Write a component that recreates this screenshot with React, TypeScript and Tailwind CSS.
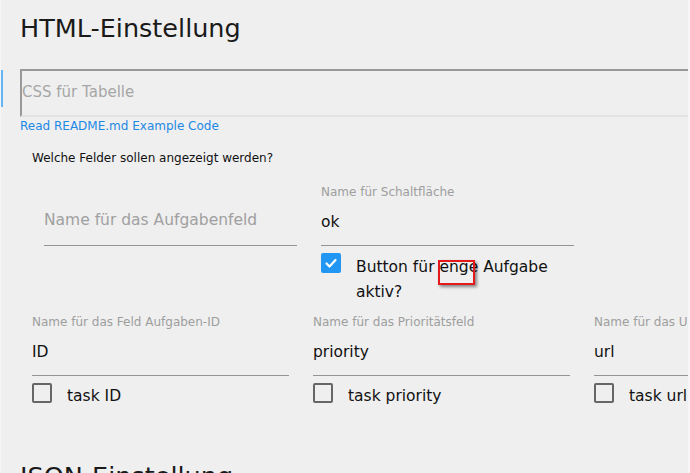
import React from 'react';

const Box = ({ checked }: { checked?: boolean }) =>
  checked ? (
    <span className="flex h-5 w-5 shrink-0 items-center justify-center rounded-[2px] bg-[#2196f3]">
      <svg viewBox="0 0 20 20" className="h-5 w-5" fill="none" stroke="#fff" strokeWidth="2.2" strokeLinecap="round" strokeLinejoin="round">
        <path d="M5.5 10.5l3 3 6-6.5" />
      </svg>
    </span>
  ) : (
    <span className="h-5 w-5 shrink-0 rounded-[2px] border-2 border-[#666]" />
  );

const Field = ({ label, value, width }: { label: string; value: string; width: string }) => (
  <div className={`${width} shrink-0 border-b border-[#949494] pb-[13px]`}>
    <div className="text-[12px] leading-[14px] text-[#9e9e9e] whitespace-nowrap">{label}</div>
    <div className="mt-[13px] text-[15.5px] leading-[20px] text-[#111]">{value}</div>
  </div>
);

const CheckRow = ({ checked, children, offset }: { checked?: boolean; children: React.ReactNode; offset: string }) => (
  <div className="mt-[7px] flex items-start gap-[15px]">
    <Box checked={checked} />
    <div className={`${offset} text-[15.5px] leading-[25px] text-[#111]`}>{children}</div>
  </div>
);

export default function App() {
  return (
    <div className="relative h-[473px] w-full overflow-hidden border-l border-r-2 border-[#f6f6f6] bg-[#efefef] font-['DejaVu_Sans',sans-serif]">
      <div className="absolute left-0 top-[70px] h-[37px] w-[2px] bg-[#64b5f6]" />

      <div className="pl-[19px]">
        <h1 className="mt-[13px] text-[25.5px] leading-[30px] font-normal text-[#1a1a1a]">HTML-Einstellung</h1>

        <div className="mt-[26px] h-[48px] border-b-2 border-l-2 border-t-2 border-b-[#e3e3e3] border-l-[#999] border-t-[#999] pt-[11px]">
          <div className="text-[15px] leading-[20px] text-[#a6a6a6]">CSS für Tabelle</div>
        </div>

        <div className="mt-[2px] text-[12px] leading-[14px] text-[#1e88e5]">Read README.md Example Code</div>

        <div className="ml-[12px] mt-[18px] text-[12px] leading-[14px] text-[#111]">Welche Felder sollen angezeigt werden?</div>

        <div className="ml-[24px] mt-[20px] flex gap-[24px]">
          <div className="h-[61px] w-[253px] shrink-0 border-b border-[#949494] pt-[25px] text-[15.5px] leading-[20px] text-[#a0a0a0]">
            Name für das Aufgabenfeld
          </div>
          <div className="w-[253px] shrink-0">
            <Field label="Name für Schaltfläche" value="ok" width="w-[253px]" />
            <CheckRow checked offset="mt-[2px]">
              Button für{' '}
              <span className="relative">
                enge
                <span className="absolute left-[-1px] top-[2px] h-[25px] w-[37px] border-2 border-[#e3191b] shadow-[2px_2px_3px_rgba(0,0,0,0.45)]" />
              </span>{' '}
              Aufgabe aktiv?
            </CheckRow>
          </div>
        </div>

        <div className="ml-[12px] mt-[10px] flex gap-[24px]">
          <div className="w-[257px] shrink-0">
            <Field label="Name für das Feld Aufgaben-ID" value="ID" width="w-[257px]" />
            <CheckRow offset="mt-[1px]">task ID</CheckRow>
          </div>
          <div className="w-[257px] shrink-0">
            <Field label="Name für das Prioritätsfeld" value="priority" width="w-[257px]" />
            <CheckRow offset="mt-[1px]">task priority</CheckRow>
          </div>
          <div className="w-[257px] shrink-0">
            <Field label="Name für das URL-Feld" value="url" width="w-[257px]" />
            <CheckRow offset="mt-[1px]">task url</CheckRow>
          </div>
        </div>

        <h1 className="mt-[52px] text-[25.5px] leading-[30px] font-normal text-[#1a1a1a]">JSON-Einstellung</h1>
      </div>
    </div>
  );
}
